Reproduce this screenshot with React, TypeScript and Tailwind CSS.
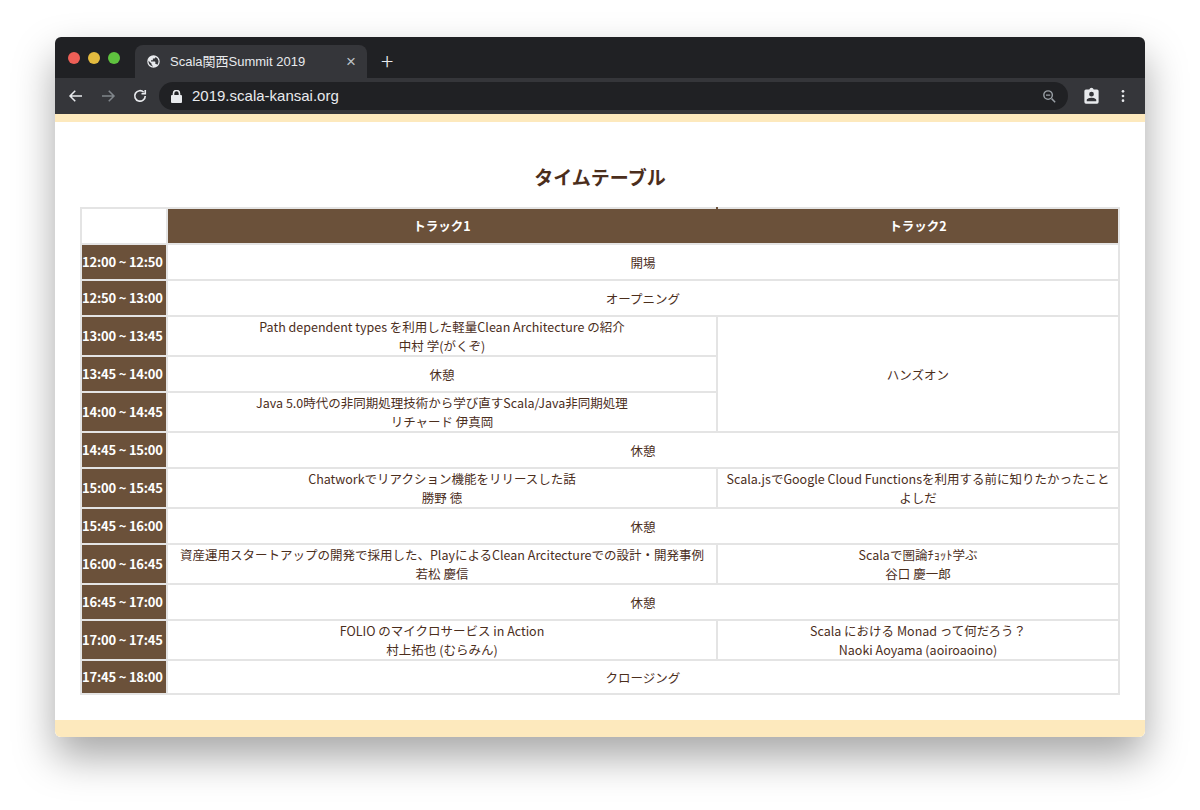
import React from "react"

const F = { fontFamily: '"Noto Sans CJK JP", "Noto Sans", sans-serif' }

type Row = { time: string; h: number; cells: React.ReactNode }

const td = "border-2 border-[#e4e4e4] text-center align-middle text-[12.5px] leading-[19px] text-[#4b2e1c]"
const tm = "border-2 border-[#e4e4e4] bg-[#6b513a] text-white font-bold text-[13px] tracking-[-0.2px] whitespace-nowrap px-0 text-left"

function Two({ a, b }: { a: string; b: string }) {
  return (
    <>
      <div>{a}</div>
      <div>{b}</div>
    </>
  )
}

export default function App() {
  const rows: Row[] = [
    { time: "12:00 ~ 12:50", h: 36, cells: <td colSpan={2} className={td}>開場</td> },
    { time: "12:50 ~ 13:00", h: 36, cells: <td colSpan={2} className={td}>オープニング</td> },
    {
      time: "13:00 ~ 13:45", h: 40,
      cells: (
        <>
          <td className={td}><Two a="Path dependent types を利用した軽量Clean Architecture の紹介" b="中村 学(がくぞ)" /></td>
          <td rowSpan={3} className={td}>ハンズオン</td>
        </>
      ),
    },
    { time: "13:45 ~ 14:00", h: 36, cells: <td className={td}>休憩</td> },
    { time: "14:00 ~ 14:45", h: 40, cells: <td className={td}><Two a="Java 5.0時代の非同期処理技術から学び直すScala/Java非同期処理" b="リチャード 伊真岡" /></td> },
    { time: "14:45 ~ 15:00", h: 36, cells: <td colSpan={2} className={td}>休憩</td> },
    {
      time: "15:00 ~ 15:45", h: 40,
      cells: (
        <>
          <td className={td}><Two a="Chatworkでリアクション機能をリリースした話" b="勝野 徳" /></td>
          <td className={td}><Two a="Scala.jsでGoogle Cloud Functionsを利用する前に知りたかったこと" b="よしだ" /></td>
        </>
      ),
    },
    { time: "15:45 ~ 16:00", h: 36, cells: <td colSpan={2} className={td}>休憩</td> },
    {
      time: "16:00 ~ 16:45", h: 40,
      cells: (
        <>
          <td className={td}><Two a="資産運用スタートアップの開発で採用した、PlayによるClean Arcitectureでの設計・開発事例" b="若松 慶信" /></td>
          <td className={td}><Two a="Scalaで圏論ﾁｮｯﾄ学ぶ" b="谷口 慶一郎" /></td>
        </>
      ),
    },
    { time: "16:45 ~ 17:00", h: 36, cells: <td colSpan={2} className={td}>休憩</td> },
    {
      time: "17:00 ~ 17:45", h: 40,
      cells: (
        <>
          <td className={td}><Two a="FOLIO のマイクロサービス in Action" b="村上拓也 (むらみん)" /></td>
          <td className={td}><Two a="Scala における Monad って何だろう？" b="Naoki Aoyama (aoiroaoino)" /></td>
        </>
      ),
    },
    { time: "17:45 ~ 18:00", h: 34, cells: <td colSpan={2} className={td}>クロージング</td> },
  ]

  return (
    <div className="h-[810px] w-[1200px] bg-white pt-[37px] pl-[55px]" style={F}>
      <div className="flex h-[700px] w-[1090px] flex-col overflow-hidden rounded-[6px] bg-white shadow-[0_20px_40px_rgba(0,0,0,0.35)]">
        {/* tab strip */}
        <div className="flex h-[41px] items-end bg-[#202124]">
          <div className="flex h-full items-center gap-[8px] pl-[13px] pr-[15px]">
            <span className="h-[12px] w-[12px] rounded-full bg-[#ed5f57]" />
            <span className="h-[12px] w-[12px] rounded-full bg-[#e4bb3f]" />
            <span className="h-[12px] w-[12px] rounded-full bg-[#5fc23f]" />
          </div>
          <div className="flex h-[33px] w-[232px] items-center rounded-t-[8px] bg-[#35363a] px-[11px] text-[13px] text-[#e8eaed]" style={{ fontFamily: '"Liberation Sans", "Noto Sans CJK JP", sans-serif' }}>
            <svg width="15" height="15" viewBox="0 0 24 24" fill="#e8eaed"><path d="M12 2a10 10 0 100 20 10 10 0 000-20zm-1 17.9A8 8 0 014.1 10.8L9 15.7v1a2 2 0 002 2v1.2zm6.9-2.5A2 2 0 0016 16h-1v-3a1 1 0 00-1-1H8v-2h2a1 1 0 001-1V7h2a2 2 0 002-2v-.4a8 8 0 012.9 12.8z" /></svg>
            <span className="ml-[9px] flex-1">Scala関西Summit 2019</span>
            <span className="text-[17px] text-[#bdc1c6]">×</span>
          </div>
          <span className="mb-[6px] ml-[14px] text-[23px] font-light leading-none text-[#e8eaed]">+</span>
        </div>
        {/* toolbar */}
        <div className="flex h-[36px] items-center bg-[#35363a] pl-[12px] pr-[14px] text-[#e8eaed]">
          <svg width="18" height="18" viewBox="0 0 24 24" fill="none" stroke="#e8eaed" strokeWidth="2"><path d="M20 12H5M11 5l-7 7 7 7" /></svg>
          <svg className="ml-[14px]" width="18" height="18" viewBox="0 0 24 24" fill="none" stroke="#80868b" strokeWidth="2"><path d="M4 12h15M13 5l7 7-7 7" /></svg>
          <svg className="ml-[14px]" width="18" height="18" viewBox="0 0 24 24" fill="none" stroke="#e8eaed" strokeWidth="2.2"><path d="M19 12a7 7 0 11-2-5" /><path d="M19 4v5h-5" fill="none" /></svg>
          <div className="ml-[10px] flex h-[28px] flex-1 items-center rounded-full bg-[#202124] pl-[12px] pr-[10px]">
            <svg width="11" height="13" viewBox="0 0 11 13" fill="#e8eaed"><rect x="0" y="5" width="11" height="8" rx="1" /><path d="M2.5 5V3.5a3 3 0 016 0V5" stroke="#e8eaed" strokeWidth="1.6" fill="none" /></svg>
            <span className="ml-[10px] flex-1 text-[15px]" style={{ fontFamily: '"Liberation Sans", sans-serif' }}>2019.scala-kansai.org</span>
            <svg width="17" height="17" viewBox="0 0 24 24" fill="none" stroke="#9aa0a6" strokeWidth="2"><circle cx="10" cy="10" r="6" /><path d="M15 15l5 5M7 10h6" /></svg>
          </div>
          <svg className="ml-[14px]" width="19" height="19" viewBox="0 0 24 24" fill="#e8eaed"><path d="M19 3h-4.2A3 3 0 0012 1a3 3 0 00-2.8 2H5a2 2 0 00-2 2v14a2 2 0 002 2h14a2 2 0 002-2V5a2 2 0 00-2-2zm-7 3a3 3 0 110 6 3 3 0 010-6zm6 12H6v-1.5c0-2 4-3 6-3s6 1 6 3V18z" /></svg>
          <svg className="ml-[14px]" width="16" height="16" viewBox="0 0 24 24" fill="#e8eaed"><circle cx="12" cy="5" r="2" /><circle cx="12" cy="12" r="2" /><circle cx="12" cy="19" r="2" /></svg>
        </div>
        <div className="h-[8px] bg-[#fde9bd]" />
        {/* page */}
        <div className="flex flex-1 flex-col items-center bg-white">
          <h1 className="mt-[40px] text-[19px] font-bold leading-[30px] text-[#4b2e1c]">タイムテーブル</h1>
          <table className="mt-[15px] w-[1040px] border-collapse table-fixed">
            <colgroup>
              <col className="w-[86px]" />
              <col className="w-[550px]" />
              <col />
            </colgroup>
            <thead>
              <tr className="h-[36px]">
                <th className="border-2 border-[#e4e4e4] bg-white" />
                <th className="border-2 border-[#e4e4e4] border-r-[#6b513a] bg-[#6b513a] text-[12.5px] font-bold text-white">トラック1</th>
                <th className="border-2 border-[#e4e4e4] border-l-[#6b513a] bg-[#6b513a] text-[12.5px] font-bold text-white">トラック2</th>
              </tr>
            </thead>
            <tbody>
              {rows.map((r) => (
                <tr key={r.time} style={{ height: r.h }}>
                  <td className={tm}>{r.time}</td>
                  {r.cells}
                </tr>
              ))}
            </tbody>
          </table>
          <div className="flex-1" />
          <div className="h-[17px] w-full bg-[#fde9bd]" />
        </div>
      </div>
    </div>
  )
}
